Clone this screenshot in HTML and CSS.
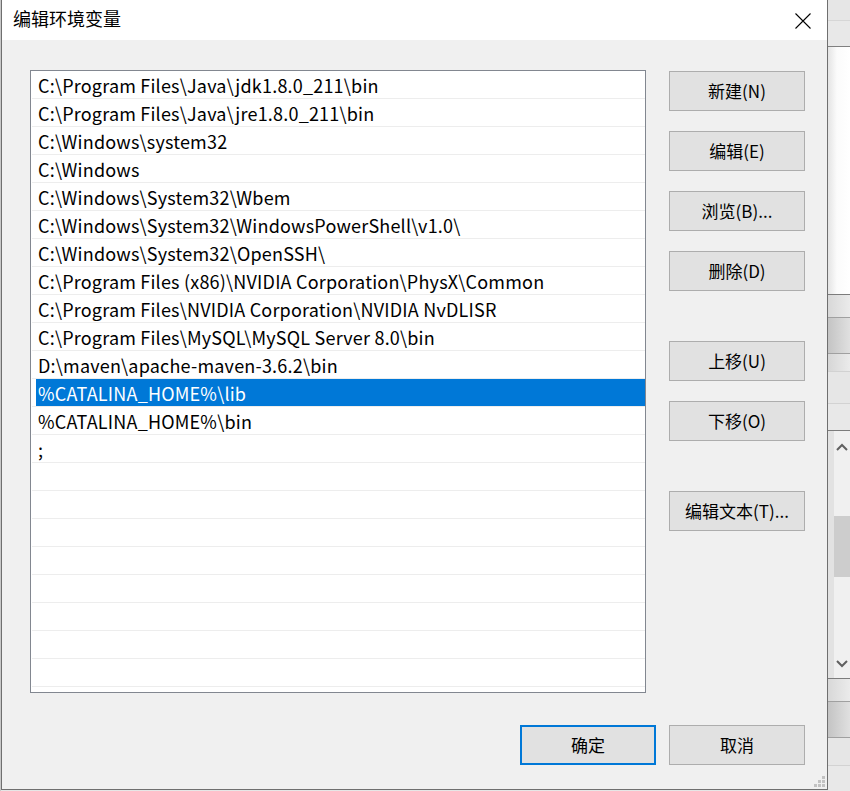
FILE: index.html
```html
<!DOCTYPE html>
<html lang="zh-CN">
<head>
    <meta charset="UTF-8">
    <title>编辑环境变量</title>
    <link rel="stylesheet" href="styles.css">
</head>
<body>
    <div class="screen">
        <div class="edge-left"></div>

        <div class="dialog">
            <div class="titlebar">
                <span class="title">编辑环境变量</span>
                <svg class="close" width="16" height="16" viewBox="0 0 16 16">
                    <path d="M0.5 0.5 L15.5 15.5 M15.5 0.5 L0.5 15.5" stroke="#000" stroke-width="1.1" fill="none"/>
                </svg>
            </div>

            <div class="client">
                <div class="main">
                    <!-- Path list -->
                    <div class="listbox">
                        <div class="row"><div class="cell">C:\Program Files\Java\jdk1.8.0_211\bin</div></div>
                        <div class="row"><div class="cell">C:\Program Files\Java\jre1.8.0_211\bin</div></div>
                        <div class="row"><div class="cell">C:\Windows\system32</div></div>
                        <div class="row"><div class="cell">C:\Windows</div></div>
                        <div class="row"><div class="cell">C:\Windows\System32\Wbem</div></div>
                        <div class="row"><div class="cell">C:\Windows\System32\WindowsPowerShell\v1.0\</div></div>
                        <div class="row"><div class="cell">C:\Windows\System32\OpenSSH\</div></div>
                        <div class="row"><div class="cell">C:\Program Files (x86)\NVIDIA Corporation\PhysX\Common</div></div>
                        <div class="row"><div class="cell">C:\Program Files\NVIDIA Corporation\NVIDIA NvDLISR</div></div>
                        <div class="row"><div class="cell">C:\Program Files\MySQL\MySQL Server 8.0\bin</div></div>
                        <div class="row"><div class="cell">D:\maven\apache-maven-3.6.2\bin</div></div>
                        <div class="row selected"><div class="cell">%CATALINA_HOME%\lib</div></div>
                        <div class="row"><div class="cell">%CATALINA_HOME%\bin</div></div>
                        <div class="row"><div class="cell">;</div></div>
                        <div class="row"><div class="cell"></div></div>
                        <div class="row"><div class="cell"></div></div>
                        <div class="row"><div class="cell"></div></div>
                        <div class="row"><div class="cell"></div></div>
                        <div class="row"><div class="cell"></div></div>
                        <div class="row"><div class="cell"></div></div>
                        <div class="row"><div class="cell"></div></div>
                        <div class="row"><div class="cell"></div></div>
                    </div>

                    <!-- Side buttons -->
                    <div class="side">
                        <button class="btn">新建(N)</button>
                        <button class="btn">编辑(E)</button>
                        <button class="btn">浏览(B)...</button>
                        <button class="btn">删除(D)</button>
                        <button class="btn group">上移(U)</button>
                        <button class="btn">下移(O)</button>
                        <button class="btn group">编辑文本(T)...</button>
                    </div>
                </div>

                <div class="footer">
                    <button class="btn default">确定</button>
                    <button class="btn">取消</button>
                </div>

                <svg class="grip" width="12" height="11" viewBox="0 0 12 11">
                    <rect x="9" y="0" width="3" height="3" fill="#c2c2c2"/>
                    <rect x="5" y="4" width="3" height="3" fill="#c2c2c2"/>
                    <rect x="9" y="4" width="3" height="3" fill="#c2c2c2"/>
                    <rect x="1" y="8" width="3" height="3" fill="#c2c2c2"/>
                    <rect x="5" y="8" width="3" height="3" fill="#c2c2c2"/>
                    <rect x="9" y="8" width="3" height="3" fill="#c2c2c2"/>
                </svg>
            </div>
        </div>

        <!-- window behind the dialog -->
        <div class="behind">
            <div class="band b1"></div>
            <div class="band b2"></div>
            <div class="band b3"></div>
            <div class="band b4"></div>
            <div class="band b5"></div>
            <div class="band b6"></div>
            <div class="band scroll">
                <svg class="arrow" width="12" height="8" viewBox="0 0 12 8"><path d="M1 7 L6 2 L11 7" stroke="#606060" stroke-width="2" fill="none"/></svg>
                <div class="thumb"></div>
                <svg class="arrow down" width="12" height="8" viewBox="0 0 12 8"><path d="M1 1 L6 6 L11 1" stroke="#606060" stroke-width="2" fill="none"/></svg>
            </div>
            <div class="band b3"></div>
            <div class="band b4"></div>
            <div class="band b9"></div>
        </div>
    </div>
</body>
</html>
```

FILE: styles.css
```css
body {
    margin: 0;
    background-color: #e6e6e6;
    font-family: "Noto Sans CJK SC", sans-serif;
    font-size: 18px;
    color: #000;
}

.screen {
    display: flex;
    height: 791px;
    overflow: hidden;
}

.edge-left {
    width: 1px;
    background-color: #c8c8c8;
}

.dialog {
    width: 825px;
    height: 789px;
    display: flex;
    flex-direction: column;
    border-left: 1px solid #6f6f6f;
    border-right: 1px solid #6f6f6f;
    border-bottom: 1px solid #6f6f6f;
    background-color: #f0f0f0;
}

.titlebar {
    height: 40px;
    background-color: #fff;
    display: flex;
    align-items: center;
    justify-content: space-between;
    padding: 0 16px 0 11px;
}

.title {
    font-size: 18px;
    margin-top: -5px;
}

.close {
    margin-top: 2px;
}

.client {
    flex: 1;
    display: flex;
    flex-direction: column;
    padding: 30px 22px 0 28px;
    position: relative;
}

.main {
    display: flex;
    gap: 23px;
}

.listbox {
    width: 614px;
    height: 621px;
    border: 1px solid #828790;
    background-color: #fff;
    overflow: hidden;
}

.row {
    margin-left: 1px;
    height: 27px;
    border-bottom: 1px solid #ededed;
    padding-left: 4px;
    display: flex;
}

.cell {
    flex: 1;
    padding: 1px 0 0 2px;
    line-height: 26px;
    letter-spacing: 0.2px;
    white-space: nowrap;
}

.row.selected .cell {
    background-color: #0078d7;
    color: #fff;
}

.side {
    display: flex;
    flex-direction: column;
    gap: 20px;
    padding-top: 1px;
}

.btn {
    width: 136px;
    height: 40px;
    box-sizing: border-box;
    background-color: #e1e1e1;
    border: 1px solid #adadad;
    border-radius: 0;
    font-family: "Noto Sans CJK SC", sans-serif;
    font-size: 17px;
    color: #000;
    padding: 0 0 1px;
}

.btn.group {
    margin-top: 30px;
}

.btn.default {
    border: 2px solid #0078d7;
}

.footer {
    display: flex;
    justify-content: flex-end;
    gap: 13px;
    margin-top: 32px;
}

.grip {
    position: absolute;
    right: 2px;
    bottom: 2px;
}

.behind {
    flex: 1;
    display: flex;
    flex-direction: column;
}

.band {
    background: linear-gradient(to right, #dcdcdc, #ececec);
    border-bottom: 1px solid #a0a0a0;
}

.b1 {
    height: 46px;
    border-bottom-color: #808080;
    background: linear-gradient(to bottom, #e6e6e6 0, #e6e6e6 20px, #d6d6d6 20px, #d6d6d6 21px, #e8e8e8 21px);
}

.b2 {
    height: 247px;
    border-bottom-color: #7c7c7c;
    background: linear-gradient(to right, #e4e4e4, #fbfbfb 40%, #ffffff);
}

.b3 {
    height: 22px;
    background: linear-gradient(to right, #d8d8d8, #ebebeb);
}

.b4 {
    height: 35px;
    background: linear-gradient(to right, #c4c4c4, #e0e0e0);
}

.b5 {
    height: 17px;
    border-bottom-color: #d2d2d2;
    background: linear-gradient(to right, #d6d6d6, #ebebeb);
}

.b6 {
    height: 58px;
    border-bottom-color: #7c7c7c;
    background: linear-gradient(to bottom, #e6e6e6 0, #e6e6e6 31px, #d2d2d2 31px, #d2d2d2 32px, #e8e8e8 32px);
}

.b9 {
    flex: 1;
    border-bottom: none;
    background: linear-gradient(to bottom, #e6e6e6 0, #e6e6e6 27px, #d2d2d2 27px, #d2d2d2 28px, #e8e8e8 28px);
}

.scroll {
    height: 248px;
    border-bottom-color: #7c7c7c;
    background: linear-gradient(to right, #e2e2e2 0, #e2e2e2 6px, #f0f0f0 6px);
    display: flex;
    flex-direction: column;
    align-items: flex-end;
    padding-top: 12px;
    box-sizing: border-box;
}

.arrow {
    margin-right: 2px;
}

.thumb {
    width: 16px;
    height: 61px;
    background-color: #cdcdcd;
    margin-top: 65px;
}

.arrow.down {
    margin-top: auto;
    margin-bottom: 10px;
}
```
